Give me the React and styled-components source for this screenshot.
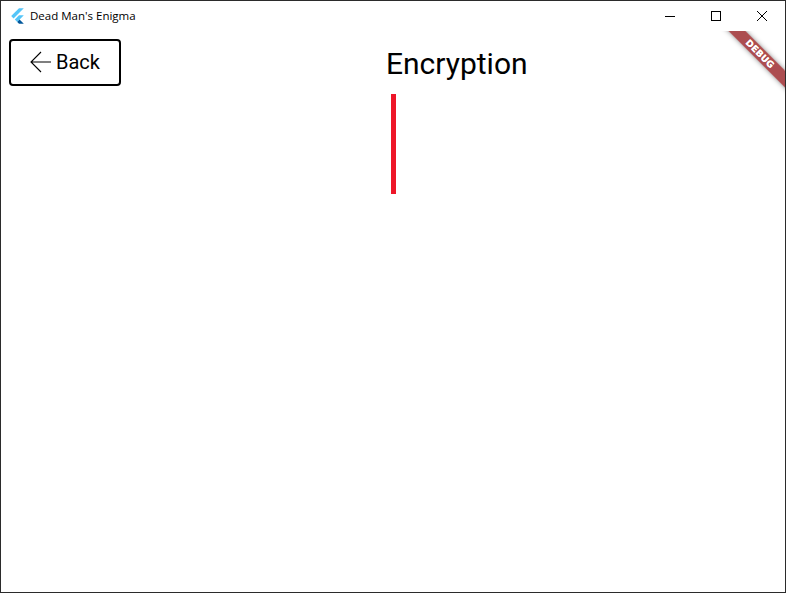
import React from 'react'
import styled, { createGlobalStyle } from 'styled-components'

const GlobalStyle = createGlobalStyle`
  html, body {
    margin: 0;
    padding: 0;
    background: #fff;
  }
`

const Window = styled.div`
  position: relative;
  box-sizing: border-box;
  width: 786px;
  height: 593px;
  border: 1px solid #2b2b2b;
  background: #fff;
  display: flex;
  flex-direction: column;
  overflow: hidden;
`

const TitleBar = styled.div`
  height: 29px;
  padding-left: 10px;
  display: flex;
  align-items: center;
  flex-shrink: 0;
`

const AppTitle = styled.span`
  margin-left: 6px;
  font-family: "Open Sans", "Noto Sans", sans-serif;
  font-size: 11.5px;
  color: #000;
  white-space: nowrap;
`

const Controls = styled.div`
  margin-left: auto;
  display: flex;
  height: 100%;
`

const ControlButton = styled.div`
  width: 46px;
  height: 100%;
  display: flex;
  align-items: center;
  justify-content: center;
`

const Content = styled.main`
  flex: 1;
  padding: 9px 0 0 8px;
  display: flex;
  align-items: flex-start;
`

const BackButton = styled.button`
  box-sizing: border-box;
  width: 112px;
  height: 47px;
  padding: 0 0 2px 19px;
  border: 2px solid #000;
  border-radius: 4px;
  background: #fff;
  display: flex;
  align-items: center;
  gap: 4px;
  font-family: Roboto, sans-serif;
  font-size: 20px;
  font-weight: 370;
  color: #000;
`

const Panel = styled.section`
  margin-left: 265px;
  display: flex;
  flex-direction: column;
`

const Heading = styled.h1`
  margin: 1px 0 0;
  font-family: Roboto, sans-serif;
  font-size: 30px;
  font-weight: 370;
  line-height: 48px;
  color: #000;
`

const Cursor = styled.div`
  width: 5px;
  height: 100px;
  margin: 6px 0 0 5px;
  background: #ee1629;
`

const BannerClip = styled.div`
  position: absolute;
  top: 30px;
  right: 0;
  width: 70px;
  height: 70px;
  overflow: hidden;
  pointer-events: none;
`

const Banner = styled.div`
  position: absolute;
  top: 17px;
  left: -5px;
  width: 100px;
  height: 12px;
  transform: rotate(45deg);
  background: rgba(140, 8, 12, 0.72);
  box-shadow: 0 0 5px rgba(0, 0, 0, 0.45);
  display: flex;
  align-items: center;
  justify-content: center;
  font-family: "DejaVu Sans", sans-serif;
  font-size: 9px;
  font-weight: 700;
  letter-spacing: 0.2px;
  text-shadow: 0 0 0.6px #fff;
  color: #fff;
`

const FlutterLogo = () => (
  <svg width="13" height="16" viewBox="2 0 20 24">
    <path fill="#54c5f8" d="M14.3 0L2.3 12 6 15.7 21.7 0z" />
    <path fill="#54c5f8" d="M14.3 11L7.9 17.5l3.7 3.7 10.1-10.2z" />
    <path fill="#01579b" d="M11.6 21.2L14.3 24h7.4l-6.5-6.5z" />
  </svg>
)

const MinimizeIcon = () => (
  <svg width="10" height="10" viewBox="0 0 10 10">
    <path d="M0 5.5H10" stroke="#000" strokeWidth="1" />
  </svg>
)

const MaximizeIcon = () => (
  <svg width="10" height="10" viewBox="0 0 10 10">
    <rect x="0.5" y="0.5" width="9" height="9" fill="none" stroke="#000" strokeWidth="1" />
  </svg>
)

const CloseIcon = () => (
  <svg width="10" height="10" viewBox="0 0 10 10">
    <path d="M0 0L10 10M10 0L0 10" stroke="#000" strokeWidth="1" />
  </svg>
)

const BackArrow = () => (
  <svg width="22" height="22" viewBox="0 0 22 22">
    <path d="M21 11H1M11 1L1 11l10 10" fill="none" stroke="#000" strokeWidth="1.1" />
  </svg>
)

export default function App() {
  return (
    <>
      <GlobalStyle />
      <Window>
        <TitleBar>
          <FlutterLogo />
          <AppTitle>Dead Man's Enigma</AppTitle>
          <Controls>
            <ControlButton><MinimizeIcon /></ControlButton>
            <ControlButton><MaximizeIcon /></ControlButton>
            <ControlButton><CloseIcon /></ControlButton>
          </Controls>
        </TitleBar>
        <Content>
          <BackButton>
            <BackArrow />
            Back
          </BackButton>
          <Panel>
            <Heading>Encryption</Heading>
            <Cursor />
          </Panel>
        </Content>
        <BannerClip>
          <Banner>DEBUG</Banner>
        </BannerClip>
      </Window>
    </>
  )
}
